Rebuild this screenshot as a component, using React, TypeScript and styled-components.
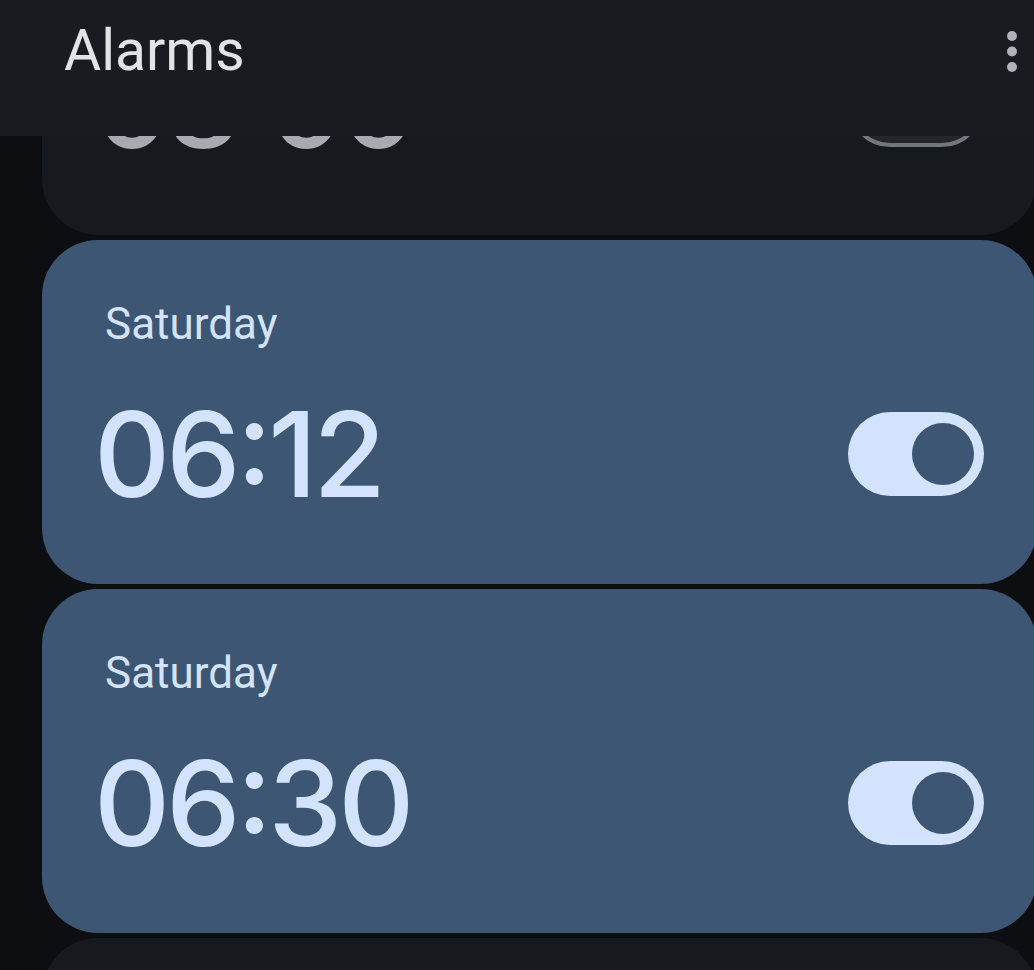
import { useLayoutEffect, useRef } from "react";
import styled, { createGlobalStyle } from "styled-components";

const GlobalStyle = createGlobalStyle`
  html, body {
    margin: 0;
    padding: 0;
    background: #0c0e11;
    overflow: hidden;
  }
  * {
    box-sizing: border-box;
  }
`;

const Screen = styled.div`
  position: relative;
  width: 1034px;
  height: 970px;
  overflow: hidden;
  background: #0c0e11;
  font-family: Roboto, "Noto Sans", sans-serif;
`;

const TopBar = styled.header`
  position: absolute;
  top: 0;
  left: 0;
  right: 0;
  height: 136px;
  z-index: 2;
  display: flex;
  align-items: flex-start;
  justify-content: space-between;
  padding: 17px 17px 0 64px;
  background: #181b20;
`;

const Title = styled.h1`
  margin: 0;
  font-size: 57px;
  line-height: 68px;
  font-weight: 400;
  color: #e3e2e6;
`;

const MenuButton = styled.button`
  margin-top: 14px;
  padding: 0;
  border: 0;
  background: none;
  display: flex;
`;

const Scroller = styled.div`
  height: 970px;
  overflow: hidden;
`;

const List = styled.div`
  display: flex;
  flex-direction: column;
  gap: 5px;
  width: 1037px;
  padding: 136px 0 24px 42px;
`;

const Card = styled.div<{ $on: boolean }>`
  display: flex;
  flex-direction: column;
  padding: 59px 53px 71px 63px;
  border-radius: 56px;
  background: ${(p) => (p.$on ? "#3c5673" : "#16191e")};
  color: ${(p) => (p.$on ? "#d3e3fd" : "#a7aab1")};
`;

const DayLabel = styled.div`
  font-size: 44px;
  line-height: 50px;
  font-weight: 400;
`;

const TimeRow = styled.div`
  display: flex;
  align-items: center;
  justify-content: space-between;
  margin-top: 46px;
`;

const Time = styled.div`
  margin-left: -11px;
  font-family: Inter, Roboto, sans-serif;
  font-size: 118px;
  line-height: 118px;
  font-weight: 500;
  letter-spacing: -4px;
  font-variant-numeric: proportional-nums;
  font-feature-settings: "case" 1;
`;

const Track = styled.div<{ $on: boolean }>`
  position: relative;
  width: 136px;
  height: 84px;
  border-radius: 42px;
  background: ${(p) => (p.$on ? "#d3e3fd" : "#23262b")};
  border: ${(p) => (p.$on ? "none" : "4px solid #72777f")};
`;

const Thumb = styled.span<{ $on: boolean }>`
  position: absolute;
  top: 50%;
  transform: translateY(-50%);
  border-radius: 50%;
  ${(p) =>
    p.$on
      ? `right: 10px; width: 62px; height: 62px; background: #3c5673;`
      : `left: 14px; width: 40px; height: 40px; background: #8c9199;`}
`;

type Alarm = { day: string; time: string; on: boolean };

const alarms: Alarm[] = [
  { day: "Tomorrow", time: "08:00", on: false },
  { day: "Saturday", time: "06:12", on: true },
  { day: "Saturday", time: "06:30", on: true },
  { day: "Not scheduled", time: "07:00", on: false },
];

const Switch = ({ on }: { on: boolean }) => (
  <Track $on={on} role="switch" aria-checked={on}>
    <Thumb $on={on} />
  </Track>
);

const AlarmCard = ({ alarm }: { alarm: Alarm }) => (
  <Card $on={alarm.on}>
    <DayLabel>{alarm.day}</DayLabel>
    <TimeRow>
      <Time>{alarm.time}</Time>
      <Switch on={alarm.on} />
    </TimeRow>
  </Card>
);

const App = () => {
  const scroller = useRef<HTMLDivElement>(null);

  useLayoutEffect(() => {
    // list is scrolled so the first alarm sits under the top bar
    if (scroller.current) scroller.current.scrollTop = 245;
  }, []);

  return (
    <>
      <GlobalStyle />
      <Screen>
        <TopBar>
          <Title>Alarms</Title>
          <MenuButton aria-label="More options">
            <svg width="10" height="41" viewBox="0 0 10 41">
              <circle cx="5" cy="5" r="5" fill="#b0b3ba" />
              <circle cx="5" cy="20.5" r="5" fill="#b0b3ba" />
              <circle cx="5" cy="36" r="5" fill="#b0b3ba" />
            </svg>
          </MenuButton>
        </TopBar>
        <Scroller ref={scroller}>
          <List>
            {alarms.map((a, i) => (
              <AlarmCard key={i} alarm={a} />
            ))}
          </List>
        </Scroller>
      </Screen>
    </>
  );
};

export default App;
